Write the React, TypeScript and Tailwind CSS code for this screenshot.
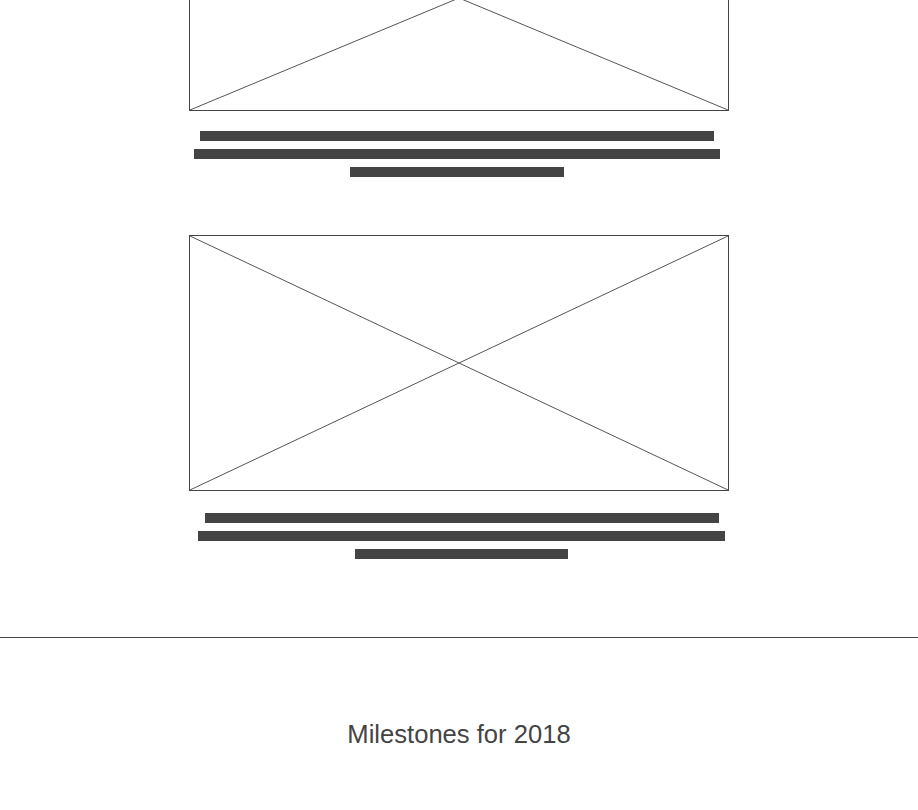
import React from 'react';

const Placeholder: React.FC<{ className?: string }> = ({ className = '' }) => (
  <div className={`relative w-full border border-[#444] bg-white ${className}`}>
    <svg className="absolute inset-0 h-full w-full" viewBox="0 0 100 100" preserveAspectRatio="none">
      <line x1="0" y1="0" x2="100" y2="100" stroke="#555" strokeWidth="1" vectorEffect="non-scaling-stroke" />
      <line x1="100" y1="0" x2="0" y2="100" stroke="#555" strokeWidth="1" vectorEffect="non-scaling-stroke" />
    </svg>
  </div>
);

// blocked-out caption text, three lines
const Caption: React.FC<{ widths: number[]; className?: string }> = ({ widths, className = '' }) => (
  <div className={`flex flex-col items-center gap-[8px] ${className}`}>
    {widths.map((w, i) => (
      <div key={i} className="h-[10px] bg-[#444]" style={{ width: w }} />
    ))}
  </div>
);

export default function App() {
  return (
    <div className="h-[810px] overflow-hidden bg-white" style={{ fontFamily: '"Liberation Sans", Arial, sans-serif' }}>
      <div className="mx-auto w-[540px] -mt-[115px]">
        <Placeholder className="h-[226px]" />
        <Caption widths={[514, 526, 214]} className="mt-[20px] pr-[4px]" />

        <Placeholder className="mt-[58px] h-[256px]" />
        <Caption widths={[514, 527, 213]} className="mt-[22px] pl-[5px]" />
      </div>

      <div className="mt-[78px] border-t border-[#444]" />

      <h2 className="mt-[84px] text-center text-[25.6px] leading-none font-normal text-[#444]">
        Milestones for 2018
      </h2>
    </div>
  );
}
